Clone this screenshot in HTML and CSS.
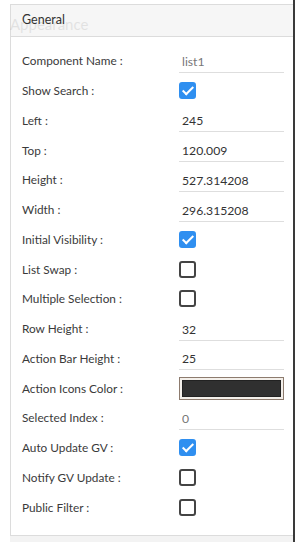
FILE: index.html
```html
<!DOCTYPE html>
<html lang="en">
<head>
  <meta charset="UTF-8" />
  <meta name="viewport" content="width=device-width, initial-scale=1.0" />
  <title>Properties</title>
  <link rel="stylesheet" href="styles.css">
</head>
<body>

  <div class="frame">
    <div class="ghost">Appearance</div>

    <div class="panel">
      <div class="panel-head">General</div>

      <div class="props">
        <label class="name">Component Name :</label>
        <div class="val"><input class="text disabled" type="text" value="list1" readonly></div>

        <label class="name">Show Search :</label>
        <div class="val"><span class="check on"></span></div>

        <label class="name">Left :</label>
        <div class="val"><input class="text" type="text" value="245"></div>

        <label class="name">Top :</label>
        <div class="val"><input class="text" type="text" value="120.009"></div>

        <label class="name">Height :</label>
        <div class="val"><input class="text" type="text" value="527.314208"></div>

        <label class="name">Width :</label>
        <div class="val"><input class="text" type="text" value="296.315208"></div>

        <label class="name">Initial Visibility :</label>
        <div class="val"><span class="check on"></span></div>

        <label class="name">List Swap :</label>
        <div class="val"><span class="check"></span></div>

        <label class="name">Multiple Selection :</label>
        <div class="val"><span class="check"></span></div>

        <label class="name">Row Height :</label>
        <div class="val"><input class="text" type="text" value="32"></div>

        <label class="name">Action Bar Height :</label>
        <div class="val"><input class="text" type="text" value="25"></div>

        <label class="name">Action Icons Color :</label>
        <div class="val"><span class="swatch"><span class="swatch-fill"></span></span></div>

        <label class="name">Selected Index :</label>
        <div class="val"><input class="text disabled" type="text" value="0" readonly></div>

        <label class="name">Auto Update GV :</label>
        <div class="val"><span class="check on"></span></div>

        <label class="name">Notify GV Update :</label>
        <div class="val"><span class="check"></span></div>

        <label class="name">Public Filter :</label>
        <div class="val"><span class="check"></span></div>
      </div>
    </div>

    <div class="below"></div>
  </div>

</body>
</html>
```

FILE: styles.css
```css
html, body {
  margin: 0;
  padding: 0;
  background: #fff;
}
body {
  font-family: Lato, "Open Sans", sans-serif;
  color: #333;
  width: 299px;
  height: 542px;
  overflow: hidden;
}
.frame {
  position: relative;
  width: 295px;
  height: 542px;
  padding: 4px 0 0 10px;
  box-sizing: border-box;
  border-right: 2px solid #3a3a3a;
}
/* faded tab label left behind the panel */
.ghost {
  position: absolute;
  left: 10px;
  top: 15px;
  font-size: 15px;
  color: #000;
  opacity: 0.08;
  pointer-events: none;
}
.panel {
  border: 1px solid #dcdcdc;
  border-right: none;
  background: #fff;
}
.panel-head {
  height: 31px;
  line-height: 30px;
  padding-left: 11px;
  font-size: 12.5px;
  background: #f6f6f6;
  border-bottom: 1px solid #dcdcdc;
  color: #333;
}
.props {
  display: grid;
  grid-template-columns: 157px 105px;
  grid-auto-rows: 29.75px;
  align-items: center;
  padding: 9px 0 13px 11px;
}
.name {
  font-size: 11.8px;
  color: #3a3a3a;
}
.val {
  display: flex;
  align-items: center;
  height: 100%;
}
.text {
  width: 100%;
  height: 22px;
  margin-top: 2px;
  box-sizing: border-box;
  border: none;
  border-bottom: 1px solid #dedede;
  padding: 0 3px;
  font-family: inherit;
  font-size: 12.2px;
  color: #333;
  outline: none;
  background: transparent;
}
.text.disabled {
  color: #777;
}
.check {
  width: 17px;
  height: 17px;
  box-sizing: border-box;
  border: 2px solid #444;
  border-radius: 3px;
  position: relative;
}
.check.on {
  background: #2f8ff0;
  border-color: #2f8ff0;
}
.check.on::after {
  content: "";
  position: absolute;
  left: 4px;
  top: 0px;
  width: 4px;
  height: 9px;
  border: solid #fff;
  border-width: 0 2px 2px 0;
  transform: rotate(45deg);
}
.swatch {
  display: block;
  width: 105px;
  height: 23px;
  box-sizing: border-box;
  border: 1px solid #8d7b6e;
  background: #f3efea;
  padding: 2px;
}
.swatch-fill {
  display: block;
  height: 100%;
  background: #303030;
  border: 1px solid #222;
  box-sizing: border-box;
}
.below {
  position: absolute;
  left: 10px;
  right: 0;
  bottom: 0;
  height: 6px;
  background: #f3f3f3;
}
```
